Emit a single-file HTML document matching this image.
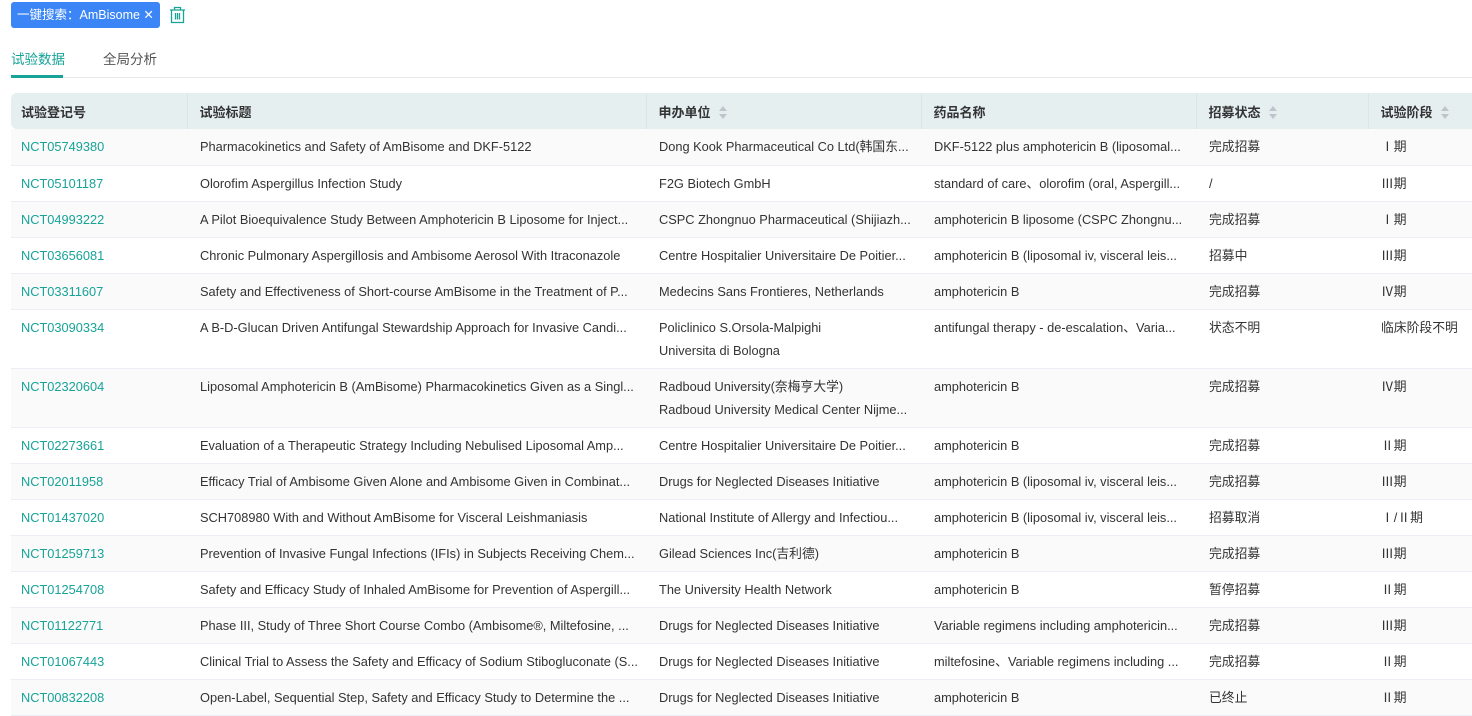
<!DOCTYPE html>
<html><head><meta charset="utf-8"><style>
*{margin:0;padding:0;box-sizing:border-box}
body{width:1472px;height:708px;overflow:hidden;background:#fff;font-family:"Liberation Sans","Noto Sans CJK SC",sans-serif;color:#333;font-size:12.8px;position:relative}
.tag{position:absolute;left:11px;top:2px;width:149px;height:26px;background:#3b85f6;border-radius:3px;color:#fff;font-size:12.5px;line-height:26px;padding-left:6px;white-space:nowrap}
.trash{position:absolute;left:169px;top:6px}
.tab{position:absolute;top:50px;font-size:13.5px;line-height:20px}
.t1{left:11px;color:#17a398}
.t2{left:103px;color:#555}
.ul{position:absolute;left:11px;top:75px;width:52px;height:3px;background:#17a398}
.line{position:absolute;left:11px;top:77px;width:1461px;height:1px;background:#e8e8e8}
table{position:absolute;left:11px;top:93px;border-collapse:collapse;table-layout:fixed;width:1480px}
th{background:#e6eff0;height:36px;text-align:left;font-weight:bold;color:#333;font-size:13px;padding-left:12px;border-left:1px solid #d8e6e7;white-space:nowrap}
th:first-child{border-left:none;border-radius:6px 0 0 6px;padding-left:10px}
td{height:36px;padding:0 0 0 13px;border-bottom:1px solid #ebeef5;white-space:nowrap;overflow:hidden;vertical-align:middle;font-size:12.8px;line-height:23px;color:#333}
td:first-child{padding-left:10px;color:#17a398}
tr:nth-child(even) td{background:#fafafa}
tr.tall td{height:59px;vertical-align:top;padding-top:6px}
.s{display:inline-block;vertical-align:middle;margin-left:8px;width:9px;height:14px;position:relative}
.s:before{content:"";position:absolute;left:0;top:0;border:4.5px solid transparent;border-bottom:5px solid #c0c4cc;border-top:0}
.s:after{content:"";position:absolute;left:0;top:8px;border:4.5px solid transparent;border-top:5px solid #c0c4cc;border-bottom:0}
</style></head><body>
<div class="tag">一键搜索：AmBisome ✕</div>
<svg class="trash" width="17" height="18" viewBox="0 0 17 18" fill="none" stroke="#17a398" stroke-width="1.3"><path d="M1 4h15M5.5 4V1.5h6V4M2.5 4v12.5h12V4M6.5 7v6.5M8.5 7v6.5M10.5 7v6.5"/></svg>
<div class="tab t1">试验数据</div><div class="tab t2">全局分析</div>
<div class="line"></div><div class="ul"></div>
<table>
<colgroup><col style="width:176px"><col style="width:459px"><col style="width:275px"><col style="width:275px"><col style="width:172px"><col style="width:123px"></colgroup>
<tr><th>试验登记号</th><th>试验标题</th><th>申办单位<span class="s"></span></th><th>药品名称</th><th>招募状态<span class="s"></span></th><th>试验阶段<span class="s"></span></th></tr>
<tr><td>NCT05749380</td><td>Pharmacokinetics and Safety of AmBisome and DKF-5122</td><td>Dong Kook Pharmaceutical Co Ltd(韩国东...</td><td>DKF-5122 plus amphotericin B (liposomal...</td><td>完成招募</td><td> Ⅰ期</td></tr>
<tr><td>NCT05101187</td><td>Olorofim Aspergillus Infection Study</td><td>F2G Biotech GmbH</td><td>standard of care、olorofim (oral, Aspergill...</td><td>/</td><td>Ⅲ期</td></tr>
<tr><td>NCT04993222</td><td>A Pilot Bioequivalence Study Between Amphotericin B Liposome for Inject...</td><td>CSPC Zhongnuo Pharmaceutical (Shijiazh...</td><td>amphotericin B liposome (CSPC Zhongnu...</td><td>完成招募</td><td> Ⅰ期</td></tr>
<tr><td>NCT03656081</td><td>Chronic Pulmonary Aspergillosis and Ambisome Aerosol With Itraconazole</td><td>Centre Hospitalier Universitaire De Poitier...</td><td>amphotericin B (liposomal iv, visceral leis...</td><td>招募中</td><td>Ⅲ期</td></tr>
<tr><td>NCT03311607</td><td>Safety and Effectiveness of Short-course AmBisome in the Treatment of P...</td><td>Medecins Sans Frontieres, Netherlands</td><td>amphotericin B</td><td>完成招募</td><td>Ⅳ期</td></tr>
<tr class="tall"><td>NCT03090334</td><td>A B-D-Glucan Driven Antifungal Stewardship Approach for Invasive Candi...</td><td>Policlinico S.Orsola-Malpighi<br>Universita di Bologna</td><td>antifungal therapy - de-escalation、Varia...</td><td>状态不明</td><td>临床阶段不明</td></tr>
<tr class="tall"><td>NCT02320604</td><td>Liposomal Amphotericin B (AmBisome) Pharmacokinetics Given as a Singl...</td><td>Radboud University(奈梅亨大学)<br>Radboud University Medical Center Nijme...</td><td>amphotericin B</td><td>完成招募</td><td>Ⅳ期</td></tr>
<tr><td>NCT02273661</td><td>Evaluation of a Therapeutic Strategy Including Nebulised Liposomal Amp...</td><td>Centre Hospitalier Universitaire De Poitier...</td><td>amphotericin B</td><td>完成招募</td><td> Ⅱ期</td></tr>
<tr><td>NCT02011958</td><td>Efficacy Trial of Ambisome Given Alone and Ambisome Given in Combinat...</td><td>Drugs for Neglected Diseases Initiative</td><td>amphotericin B (liposomal iv, visceral leis...</td><td>完成招募</td><td>Ⅲ期</td></tr>
<tr><td>NCT01437020</td><td>SCH708980 With and Without AmBisome for Visceral Leishmaniasis</td><td>National Institute of Allergy and Infectiou...</td><td>amphotericin B (liposomal iv, visceral leis...</td><td>招募取消</td><td> Ⅰ/Ⅱ期</td></tr>
<tr><td>NCT01259713</td><td>Prevention of Invasive Fungal Infections (IFIs) in Subjects Receiving Chem...</td><td>Gilead Sciences Inc(吉利德)</td><td>amphotericin B</td><td>完成招募</td><td>Ⅲ期</td></tr>
<tr><td>NCT01254708</td><td>Safety and Efficacy Study of Inhaled AmBisome for Prevention of Aspergill...</td><td>The University Health Network</td><td>amphotericin B</td><td>暂停招募</td><td> Ⅱ期</td></tr>
<tr><td>NCT01122771</td><td>Phase III, Study of Three Short Course Combo (Ambisome®, Miltefosine, ...</td><td>Drugs for Neglected Diseases Initiative</td><td>Variable regimens including amphotericin...</td><td>完成招募</td><td>Ⅲ期</td></tr>
<tr><td>NCT01067443</td><td>Clinical Trial to Assess the Safety and Efficacy of Sodium Stibogluconate (S...</td><td>Drugs for Neglected Diseases Initiative</td><td>miltefosine、Variable regimens including ...</td><td>完成招募</td><td> Ⅱ期</td></tr>
<tr><td>NCT00832208</td><td>Open-Label, Sequential Step, Safety and Efficacy Study to Determine the ...</td><td>Drugs for Neglected Diseases Initiative</td><td>amphotericin B</td><td>已终止</td><td> Ⅱ期</td></tr>
</table>
</body></html>
